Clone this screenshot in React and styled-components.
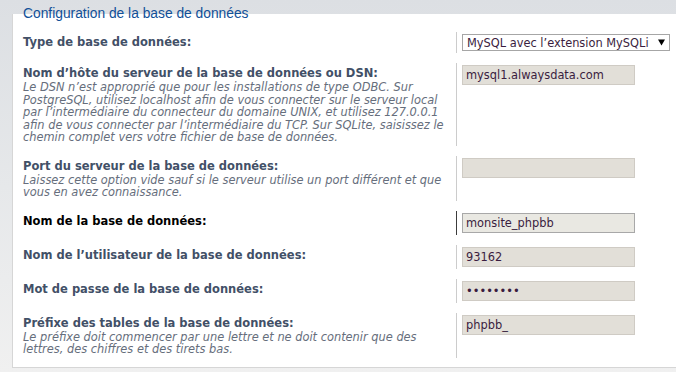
import React from "react";
import styled, { createGlobalStyle } from "styled-components";

const GlobalStyle = createGlobalStyle`
    html, body {
        margin: 0;
        padding: 0;
    }
    body {
        width: 676px;
        height: 372px;
        overflow: hidden;
        background: linear-gradient(#dcdfe3 0%, #e6e8ea 50%, #f0f0f0 100%);
        font-family: "DejaVu Sans", Verdana, sans-serif;
    }
`;

const Page = styled.div`
    box-sizing: border-box;
    height: 372px;
    padding: 14px 0 0 12px;
`;

const Fieldset = styled.div`
    display: flow-root;
    box-sizing: border-box;
    height: 354px;
    background: #ffffff;
    border-left: 1px solid #d6d6d6;
    border-bottom: 1px solid #d6d6d6;
`;

const Legend = styled.div`
    margin-top: -8px;
    padding-left: 10px;
    height: 16px;
    line-height: 16px;
    font-family: "Liberation Sans", Arial, sans-serif;
    font-size: 13.8px;
    color: #115098;
`;

const List = styled.div`
    display: flex;
    flex-direction: column;
    gap: 10px;
    padding-top: 10px;
`;

const Row = styled.div`
    display: flex;
    align-items: stretch;
`;

const Term = styled.div`
    box-sizing: border-box;
    width: 443px;
    padding: 3px 10px 2px 10px;
`;

const Label = styled.label`
    display: block;
    font-size: 11.5px;
    line-height: 15px;
    font-weight: bold;
    color: ${(p) => (p.active ? "#000000" : "#425067")};
`;

const Explain = styled.span`
    display: block;
    font-size: 11.4px;
    line-height: 12.5px;
    font-style: italic;
    color: #666e7c;
`;

const Value = styled.div`
    padding: 2px 0 2px 5px;
    border-left: 1px solid ${(p) => (p.active ? "#3c3c3c" : "#cccccc")};
`;

const TextBox = styled.input`
    box-sizing: border-box;
    display: block;
    width: 173px;
    height: 20px;
    margin: 0;
    padding: 0 3px;
    font-family: "DejaVu Sans", Verdana, sans-serif;
    font-size: 11.4px;
    color: #3a1d40;
    background: ${(p) => (p.active ? "#e9e8e2" : "#e2dfd8")};
    border: 1px solid ${(p) => (p.active ? "#a8a8a8" : "#cfcbc4")};
    outline: none;
`;

const Select = styled.div`
    box-sizing: border-box;
    display: flex;
    align-items: center;
    justify-content: space-between;
    width: 208px;
    height: 17px;
    padding: 0 4px 0 4px;
    font-size: 11.4px;
    color: #3a1d40;
    background: #ffffff;
    border: 1px solid #a6a6a6;
`;

const Arrow = () => (
    <svg width="7" height="7" viewBox="0 0 7 7">
        <path d="M0 0.5 H7 L3.5 6.5 Z" fill="#000" />
    </svg>
);

const fields = [
    {
        label: "Nom d’hôte du serveur de la base de données ou DSN:",
        explain:
            "Le DSN n’est approprié que pour les installations de type ODBC. Sur PostgreSQL, utilisez localhost afin de vous connecter sur le serveur local par l’intermédiaire du connecteur du domaine UNIX, et utilisez 127.0.0.1 afin de vous connecter par l’intermédiaire du TCP. Sur SQLite, saisissez le chemin complet vers votre fichier de base de données.",
        value: "mysql1.alwaysdata.com",
    },
    {
        label: "Port du serveur de la base de données:",
        explain:
            "Laissez cette option vide sauf si le serveur utilise un port différent et que vous en avez connaissance.",
        value: "",
    },
    { label: "Nom de la base de données:", value: "monsite_phpbb", active: true },
    { label: "Nom de l’utilisateur de la base de données:", value: "93162" },
    { label: "Mot de passe de la base de données:", value: "password", type: "password" },
    {
        label: "Préfixe des tables de la base de données:",
        explain:
            "Le préfixe doit commencer par une lettre et ne doit contenir que des lettres, des chiffres et des tirets bas.",
        value: "phpbb_",
    },
];

export default function App() {
    return (
        <>
            <GlobalStyle />
            <Page>
                <Fieldset>
                    <Legend>Configuration de la base de données</Legend>
                    <List>
                        <Row>
                            <Term>
                                <Label>Type de base de données:</Label>
                            </Term>
                            <Value>
                                <Select>
                                    <span>MySQL avec l’extension MySQLi</span>
                                    <Arrow />
                                </Select>
                            </Value>
                        </Row>
                        {fields.map((f) => (
                            <Row key={f.label}>
                                <Term>
                                    <Label active={f.active}>{f.label}</Label>
                                    {f.explain && <Explain>{f.explain}</Explain>}
                                </Term>
                                <Value active={f.active}>
                                    <TextBox
                                        type={f.type || "text"}
                                        defaultValue={f.value}
                                        active={f.active}
                                        readOnly
                                    />
                                </Value>
                            </Row>
                        ))}
                    </List>
                </Fieldset>
            </Page>
        </>
    );
}
